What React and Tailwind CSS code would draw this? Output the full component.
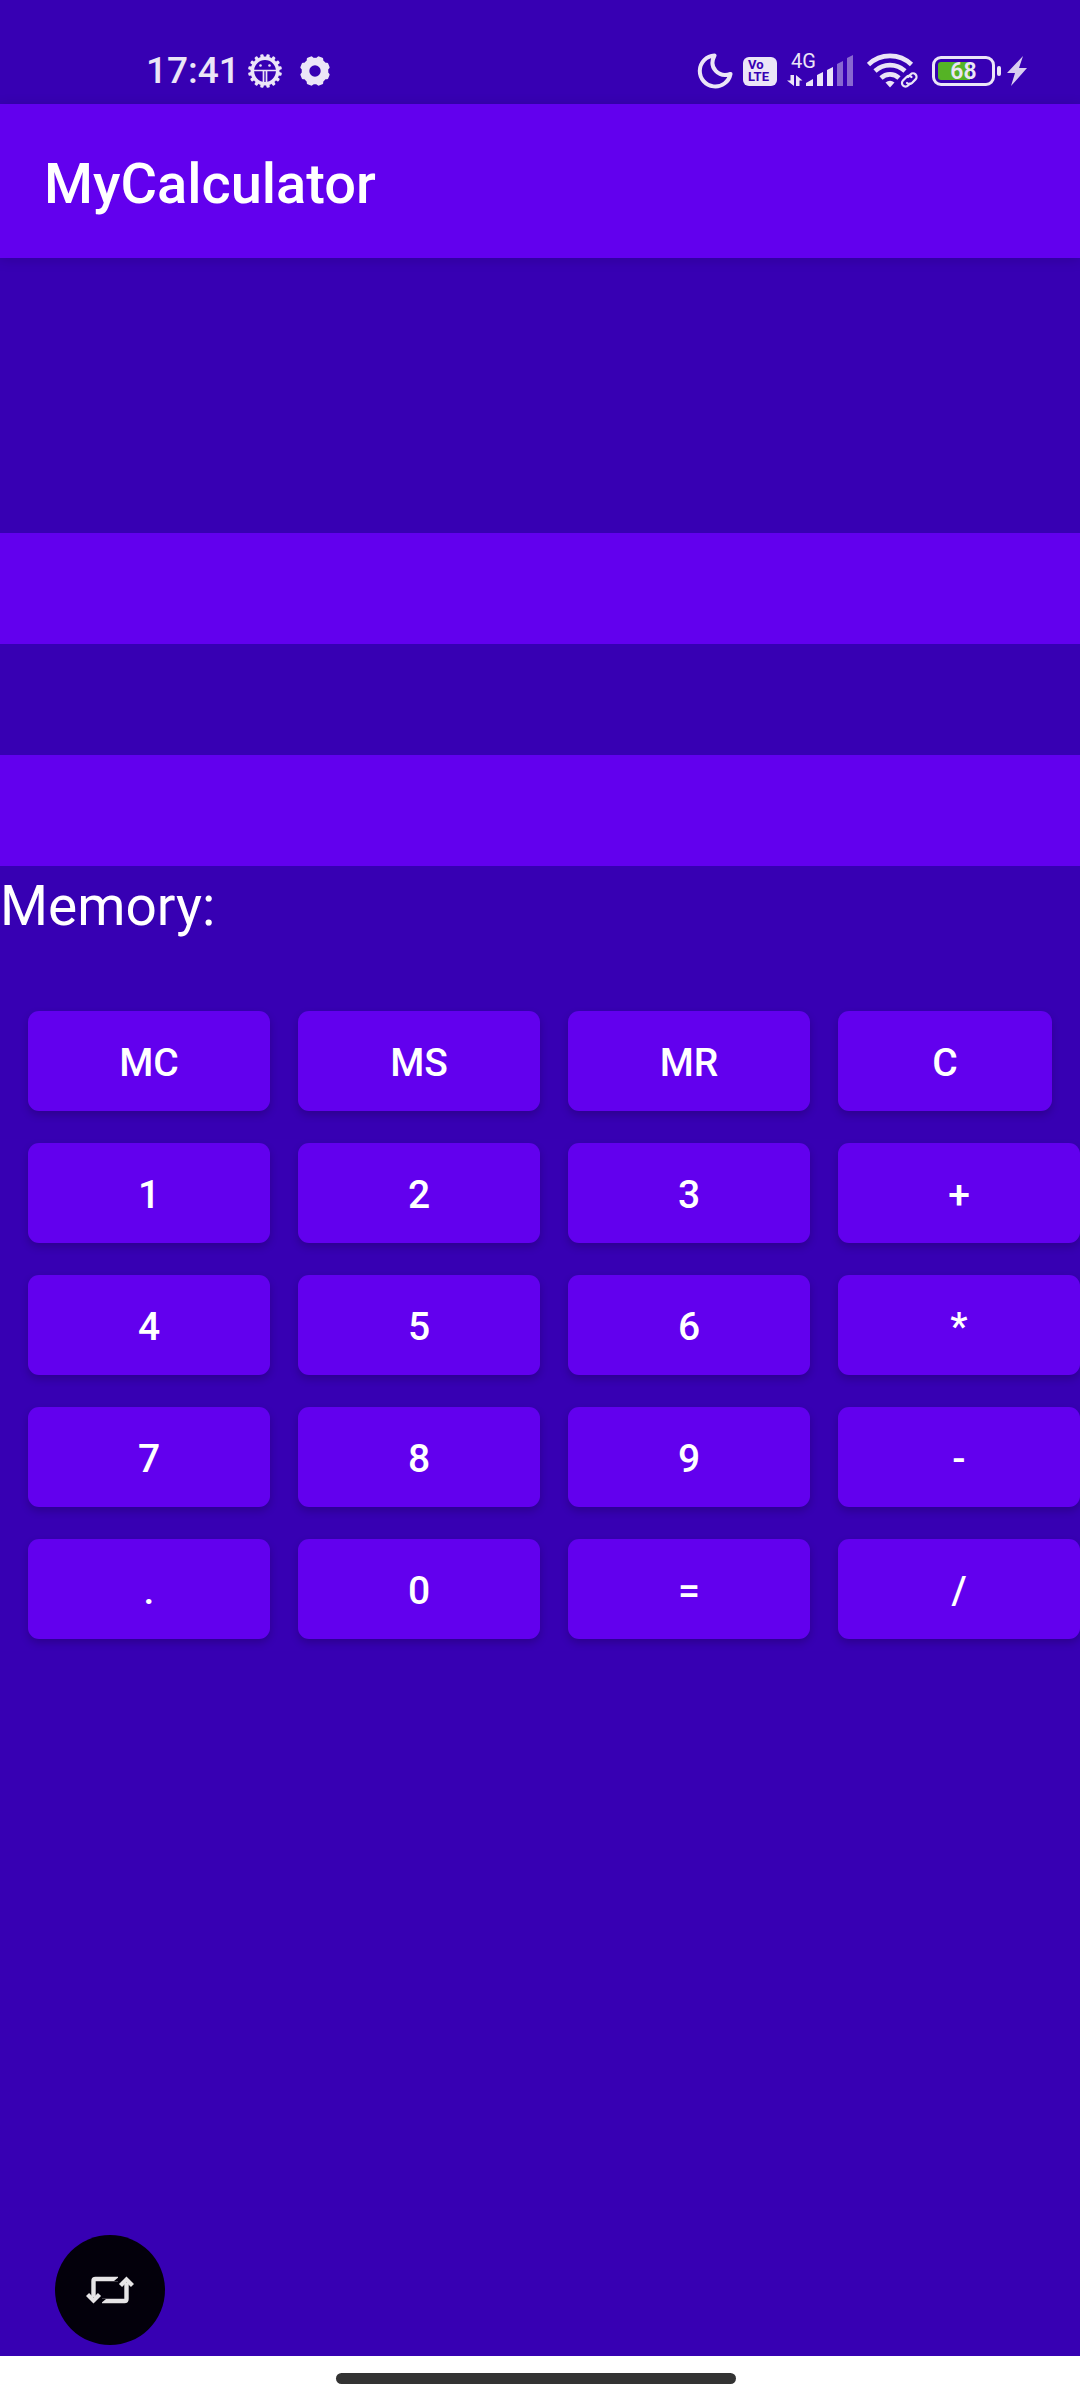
const ROWS = [
  ["MC", "MS", "MR", "C"],
  ["1", "2", "3", "+"],
  ["4", "5", "6", "*"],
  ["7", "8", "9", "-"],
  [".", "0", "=", "/"],
];

function DebugIcon() {
  const teeth = Array.from({ length: 16 }, (_, i) => i * 22.5 + 11.25);
  return (
    <svg width="34" height="34" viewBox="0 0 34 34" fill="none" aria-hidden="true">
      <circle cx="17" cy="17" r="12.700" stroke="#ebe5f7" strokeWidth="3.600" />
      {teeth.map((a) => (
        <rect key={a} x="15.300" y="0" width="3.400" height="4" rx="1.200" fill="#ebe5f7" transform={`rotate(${a} 17 17)`} />
      ))}
      <path d="M5 16.500h24M15.500 17v12M18.500 17v12" stroke="#ebe5f7" strokeWidth="1.700" />
      <circle cx="12.500" cy="11.500" r="1.300" fill="#ebe5f7" />
      <circle cx="21.500" cy="11.500" r="1.300" fill="#ebe5f7" />
    </svg>
  );
}

function GearIcon() {
  const lobes = [0, 45, 90, 135, 180, 225, 270, 315];
  return (
    <svg width="30" height="30" viewBox="0 0 30 30" fill="none" aria-hidden="true">
      <circle cx="15" cy="15" r="9.500" stroke="#ebe5f7" strokeWidth="7.600" />
      {lobes.map((a) => (
        <path key={a} d="M10.500 4L12 .8Q12.300 0 13.200 0H16.800Q17.700 0 18 .8L19.500 4z" fill="#ebe5f7" transform={`rotate(${a + 22.5} 15 15)`} />
      ))}
    </svg>
  );
}

function MoonIcon() {
  return (
    <svg width="36" height="36" viewBox="0 0 36 36" fill="none" aria-hidden="true">
      <path d="M17.500 2.500A15.500 15.500 0 1 0 33.500 21C22 25 11 15 17.500 2.500Z" stroke="#ebe5f7" strokeWidth="4" strokeLinejoin="round" />
    </svg>
  );
}

function SignalIcon() {
  return (
    <svg width="67" height="32" viewBox="0 0 67 32" fill="#ebe5f7" aria-hidden="true">
      <path d="M3.500 20H7v11L0 25.500h3.500zM9 20l6.500 5.500H12.500V31H9z" />
      <path d="M19 31v-3l7-4v7z" />
      <path d="M30 31V20l6-3v14z" />
      <path d="M40 31V15l6-3v19z" />
      <path d="M50 31V9l6-3v25z" opacity=".45" />
      <path d="M60 31V3l6-3v31z" opacity=".45" />
    </svg>
  );
}

function WifiIcon() {
  return (
    <svg width="52" height="36" viewBox="0 0 52 36" fill="none" stroke="#ebe5f7" strokeWidth="4.600" aria-hidden="true">
      <path d="M1.500 11.500A31 31 0 0 1 44.500 11.500" />
      <path d="M8 18A22 22 0 0 1 38 18" />
      <path d="M14 25A13 13 0 0 1 32 25" />
      <path d="M18.500 29.500Q23 26 27.500 29.500L23 34.500z" fill="#ebe5f7" stroke="none" />
      <g strokeWidth="2.200" strokeLinecap="round">
        <path d="M41 24l2.500-2.600a3.500 3.500 0 0 1 5 5L45 30a3.500 3.500 0 0 1-5 0" />
        <path d="M43 30.500l-2 2a3.500 3.500 0 0 1-5-5l3.500-3.500a3.500 3.500 0 0 1 5 0" />
      </g>
    </svg>
  );
}

function Battery() {
  return (
    <div className="flex items-center gap-0.5">
      <div className="relative h-[30px] w-[63px] rounded-[9px] border-[3px] border-[#ebe5f7] p-[3px]">
        <div className="h-full w-8 rounded-l-[3px] bg-[#55b325]" />
        <span className="absolute inset-0 flex items-center justify-center text-[23px] font-semibold leading-none">68</span>
      </div>
      <div className="h-[10px] w-1 rounded-sm bg-[#ebe5f7]" />
    </div>
  );
}

function StatusBar() {
  return (
    <div className="flex h-[104px] items-start justify-between pl-[146px] pr-[52px] pt-[51px] text-[#ebe5f7]">
      <div className="flex h-10 items-center">
        <span className="text-[37px] font-medium leading-10">17:41</span>
        <span className="ml-2"><DebugIcon /></span>
        <span className="ml-[18px]"><GearIcon /></span>
      </div>
      <div className="flex h-10 items-center">
        <MoonIcon />
        <div className="ml-[10px] flex h-[29px] w-[34px] flex-col items-start justify-center rounded-md bg-[#ebe5f7] pl-[5px] text-[13px] font-bold leading-[12px] text-[#3700b3]">
          <span>Vo</span>
          <span>LTE</span>
        </div>
        <div className="relative ml-[10px]">
          <SignalIcon />
          <span className="absolute -top-1 left-1 text-[20px] leading-5">4G</span>
        </div>
        <span className="ml-[13px]"><WifiIcon /></span>
        <span className="ml-[13px]"><Battery /></span>
        <svg className="ml-1.5" width="21" height="30" viewBox="0 0 21 30" fill="#ebe5f7" opacity=".9" aria-hidden="true">
          <path d="M16 0L0 17h8L4 30 20 12h-8z" />
        </svg>
      </div>
    </div>
  );
}

function SwapIcon() {
  return (
    <svg width="48" height="28" viewBox="0 0 48 28" fill="none" stroke="#e6e4e6" strokeWidth="4.400" aria-hidden="true">
      <path d="M7.500 21V5Q7.500 3 9.500 3H32" />
      <path d="M40.500 7V23Q40.500 25 38.500 25H16" />
      <path d="M1.500 18.500l6 6 6-6M34.500 9.500l6-6 6 6" />
      <path d="M34 0v5l-6 0zM14 28v-5l6 0z" fill="#03000b" stroke="none" />
    </svg>
  );
}

export default function App() {
  return (
    <div className="flex min-h-screen flex-col overflow-x-hidden bg-[#3700b3] font-['Roboto',sans-serif] text-white">
      <StatusBar />
      <header className="flex h-[154px] items-center bg-[#6200ee] px-11 pt-1.5 shadow-[0_2px_12px_rgba(0,0,0,0.15)]">
        <h1 className="text-[56px] font-medium leading-[64px]">MyCalculator</h1>
      </header>
      <main className="flex flex-1 flex-col">
        <output className="mt-[275px] block h-[111px] bg-[#6200ee]" aria-label="First operand" />
        <output className="mt-[111px] block h-[111px] bg-[#6200ee]" aria-label="Second operand" />
        <p className="mt-2 text-[55px] leading-[64px]">Memory:</p>
        <div className="mt-[73px] grid grid-cols-4 gap-x-7 gap-y-8 pl-7">
          {ROWS.flat().map((label) => (
            <button
              key={label}
              type="button"
              className={`h-[100px] rounded-[11px] bg-[#6200ee] pt-1 text-[39px] font-medium shadow-[0_4px_8px_rgba(0,0,0,0.2)] ${label === "C" ? "mr-7" : ""}`}
            >
              {label}
            </button>
          ))}
        </div>
        <button
          type="button"
          aria-label="Rotate screen"
          className="mb-[11px] ml-[55px] mt-auto flex size-[110px] items-center justify-center rounded-full bg-[#03000b]"
        >
          <SwapIcon />
        </button>
      </main>
      <footer className="flex h-11 justify-center bg-white pt-[17px]">
        <div className="mr-2 h-[11px] w-[37%] rounded-full bg-[#333333]" />
      </footer>
    </div>
  );
}
